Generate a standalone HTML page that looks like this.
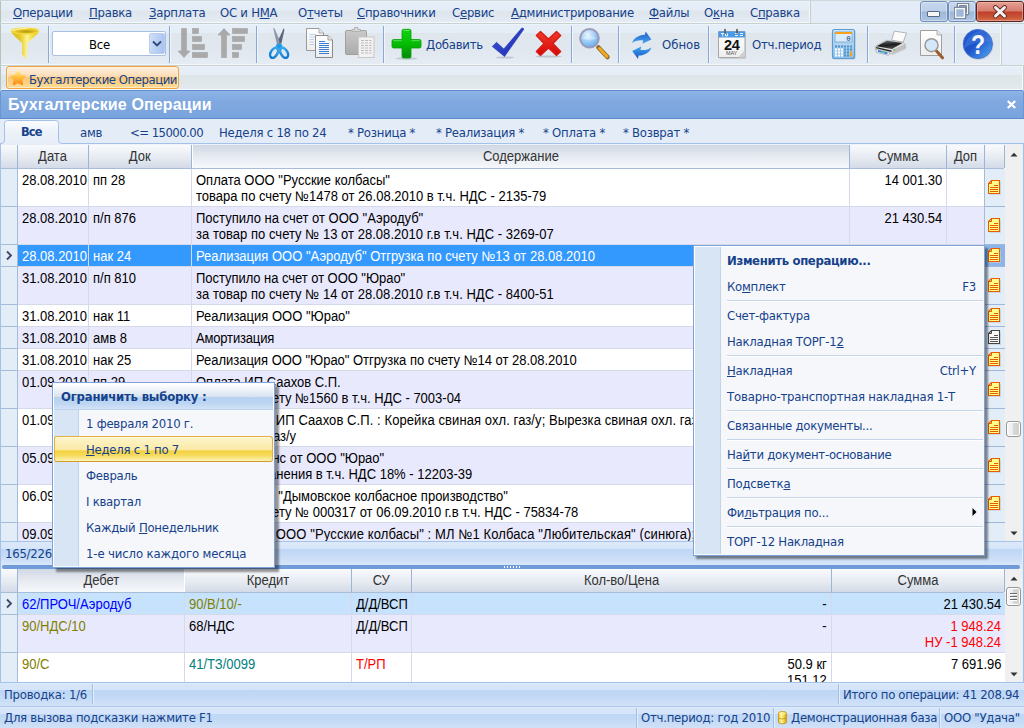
<!DOCTYPE html>
<html lang="ru"><head><meta charset="utf-8"><title>Бухгалтерские Операции</title>
<style>
*{box-sizing:border-box;margin:0;padding:0}
html,body{width:1024px;height:728px;overflow:hidden;background:#e4ecf7}
body{position:relative;font:13px "DejaVu Sans Condensed","Liberation Sans",sans-serif;color:#15428b;letter-spacing:-0.25px}
.a{position:absolute;white-space:nowrap}
.t{position:absolute;white-space:nowrap;line-height:16px;height:16px;margin-top:1px}
u{text-decoration:underline;text-underline-offset:1px;text-decoration-thickness:1px}
.g{font:13px "Liberation Sans",sans-serif;color:#000;letter-spacing:0}
.sep{position:absolute;width:1px;top:26px;height:37px;background:#8aa8d8;box-shadow:1px 0 0 #f0f5fb}
.hd{position:absolute;top:0;height:23px;background:linear-gradient(#f8fafc,#e8ecf3 50%,#d4dbe8);border-right:1px solid #9db4d6;font:13px "Liberation Sans",sans-serif;color:#333;letter-spacing:0;text-align:center;line-height:23px}
.row{position:absolute;left:0;width:1005px;border-bottom:1px solid #d4dae9}
.c{position:absolute;top:0;bottom:0;border-right:1px solid #d4dae9;font:13px "Liberation Sans",sans-serif;letter-spacing:0;line-height:16px;padding:3px 4px 0 4px;white-space:nowrap;overflow:hidden;color:#000}
.ind{position:absolute;left:0;top:0;bottom:-1px;width:18px;background:#e3edf7;border-right:1px solid #a5bbd8;border-bottom:1px solid #a5bbd8}
.ic{position:absolute;left:985px;top:0;bottom:-1px;width:20px;background:#e3edf7;border-bottom:1px solid #9fb8da;box-shadow:-1px 0 0 #a5bbd8}

.s{display:inline-block;font-size:14px;transform:scaleX(.9286);transform-origin:0 0;white-space:nowrap}
.s.r{transform-origin:100% 0}
.s.m{transform-origin:50% 0}
.mi{position:absolute;left:33px;height:16px;line-height:16px;white-space:nowrap;margin-top:1px}

.ttl{font-family:"Liberation Sans",sans-serif;font-weight:bold;font-size:16px;color:#fff;letter-spacing:0.13px;line-height:20px;margin-top:1px}
.ms{position:absolute;left:33px;right:1px;height:1px;background:#c5d5e8;box-shadow:0 1px 0 #fff}
</style></head>
<body>
<div class="a" style="left:0;top:0;width:1024px;height:24px;background:#e4edf7;border-top:1px solid #cdd8da;border-bottom:1px solid #c6d2cf"></div>
<div class="a" style="left:0;top:1px;width:811px;height:22px;background:linear-gradient(#f4f8fc 0,#e5edf7 1px,#e4ecf6 42%,#dfe6ed 44%,#e0e7ee 70%,#e5ecf4 100%);border-left:1px solid #b4c4b9;border-right:1px solid #c3cfc9;box-shadow:inset -1px -1px 0 #f4f8fc"></div>
<div class="t" style="left:13px;top:4px"><u>О</u>перации</div>
<div class="t" style="left:89px;top:4px"><u>П</u>равка</div>
<div class="t" style="left:149px;top:4px"><u>З</u>арплата</div>
<div class="t" style="left:220px;top:4px">ОС и Н<u>М</u>А</div>
<div class="t" style="left:298px;top:4px">О<u>т</u>четы</div>
<div class="t" style="left:357px;top:4px"><u>С</u>правочники</div>
<div class="t" style="left:452px;top:4px">С<u>е</u>рвис</div>
<div class="t" style="left:511px;top:4px"><u>А</u>дминистрирование</div>
<div class="t" style="left:649px;top:4px"><u>Ф</u>айлы</div>
<div class="t" style="left:704px;top:4px">О<u>к</u>на</div>
<div class="t" style="left:750px;top:4px">С<u>п</u>равка</div>
<div class="a" style="left:920px;top:1px;width:28px;height:21px;border:1px solid #6f8fba;border-radius:3px;background:linear-gradient(#c6d7ed,#bdd0e9 48%,#9db8d9 52%,#aec5e2);box-shadow:inset 0 0 0 1px rgba(255,255,255,.35)"><div class="a" style="left:6px;top:9px;width:13px;height:6px;background:#f6f6f6;border:1px solid #56677f;border-radius:1px"></div></div>
<div class="a" style="left:948px;top:1px;width:28px;height:21px;border:1px solid #6f8fba;border-radius:3px;background:linear-gradient(#c6d7ed,#bdd0e9 48%,#9db8d9 52%,#aec5e2);box-shadow:inset 0 0 0 1px rgba(255,255,255,.35)"><svg class="a" style="left:5px;top:1px" width="16" height="16" viewBox="0 0 16 16"><path d="M4.500 5 V1.500 H13.500 V10.500 H10.500" fill="none" stroke="#4e5f7a" stroke-width="3.400" stroke-linejoin="round"/><path d="M4.500 5 V1.500 H13.500 V10.500 H10.500" fill="none" stroke="#f6f6f6" stroke-width="1.600"/><rect x="1.500" y="5.500" width="9" height="9" fill="none" stroke="#4e5f7a" stroke-width="3.400" stroke-linejoin="round"/><rect x="1.500" y="5.500" width="9" height="9" fill="#9fb7d8" stroke="#f6f6f6" stroke-width="1.600"/></svg></div>
<div class="a" style="left:976px;top:1px;width:48px;height:21px;border:1px solid #5a2222;border-radius:3px;background:linear-gradient(#e3a295,#d67c6e 48%,#bf3e29 52%,#c85638 80%,#d3704c);box-shadow:inset 0 0 0 1px rgba(255,200,185,.45)"><svg class="a" style="left:15px;top:3px" width="16" height="14" viewBox="0 0 16 14"><path d="M3.500 2.500 L12.500 11 M12.500 2.500 L3.500 11" stroke="#6a2a25" stroke-width="4.800" stroke-linecap="round"/><path d="M3.500 2.500 L12.500 11 M12.500 2.500 L3.500 11" stroke="#f4f4f4" stroke-width="3" stroke-linecap="round"/></svg></div>
<div class="a" style="left:0;top:24px;width:1024px;height:42px;background:#e4edf7;border-bottom:1px solid #c8d3d0"></div>
<div class="a" style="left:0;top:24px;width:1002px;height:41px;background:linear-gradient(#f4f8fc 0,#e6eef8 1px,#e5edf7 21%,#dfe6ec 23%,#e0e7ee 60%,#e5ecf4 100%);border-left:1px solid #b4c4b9;border-right:1px solid #c3cfc9;box-shadow:inset -1px -1px 0 #f4f8fc"></div>
<div class="sep" style="left:48px"></div>
<div class="sep" style="left:169px"></div>
<div class="sep" style="left:256px"></div>
<div class="sep" style="left:383px"></div>
<div class="sep" style="left:571px"></div>
<div class="sep" style="left:618px"></div>
<div class="sep" style="left:708px"></div>
<div class="sep" style="left:867px"></div>
<div class="sep" style="left:954px"></div>
<svg class="a" style="left:0;top:24px" width="1002" height="41" viewBox="0 24 1002 41">
<defs>
<linearGradient id="fn1" x1="0" y1="0" x2="1" y2="0"><stop offset="0" stop-color="#dcbc1c"/><stop offset=".3" stop-color="#e4c626"/><stop offset=".58" stop-color="#fff48c"/><stop offset=".8" stop-color="#f2da3e"/><stop offset="1" stop-color="#e2c222"/></linearGradient>
<radialGradient id="fn2" cx=".55" cy=".6" r=".6"><stop offset="0" stop-color="#b6960e"/><stop offset=".5" stop-color="#dcbe24"/><stop offset="1" stop-color="#f6e252"/></radialGradient>
<linearGradient id="gp" x1="0" y1="0" x2="0" y2="1"><stop offset="0" stop-color="#12d312"/><stop offset=".5" stop-color="#06bd06"/><stop offset="1" stop-color="#048a04"/></linearGradient>
<linearGradient id="bl" x1="0" y1="0" x2="1" y2="1"><stop offset="0" stop-color="#3f55e0"/><stop offset="1" stop-color="#1a2aa8"/></linearGradient>
<linearGradient id="rd" x1="0" y1="0" x2="0" y2="1"><stop offset="0" stop-color="#f23a2a"/><stop offset="1" stop-color="#d40808"/></linearGradient>
<radialGradient id="ln" cx=".4" cy=".3" r=".8"><stop offset="0" stop-color="#eaf6ff"/><stop offset=".6" stop-color="#8cc4f4"/><stop offset="1" stop-color="#5aa0e6"/></radialGradient>
<linearGradient id="hl" x1="0" y1="0" x2="1" y2="1"><stop offset="0" stop-color="#2a60d2"/><stop offset=".45" stop-color="#1d52c8"/><stop offset=".9" stop-color="#489cec"/></linearGradient>
<linearGradient id="rf" x1="0" y1="0" x2="0" y2="1"><stop offset="0" stop-color="#1c58c8"/><stop offset="1" stop-color="#4aa8f0"/></linearGradient>
<linearGradient id="pg" x1="0" y1="0" x2="0" y2="1"><stop offset="0" stop-color="#ffffff"/><stop offset="1" stop-color="#eeeeee"/></linearGradient>
<linearGradient id="cb" x1="0" y1="0" x2="0" y2="1"><stop offset="0" stop-color="#c9c9c9"/><stop offset="1" stop-color="#ababab"/></linearGradient>
<linearGradient id="cl" x1="0" y1="0" x2="0" y2="1"><stop offset="0" stop-color="#cfe6f8"/><stop offset="1" stop-color="#8fc0e8"/></linearGradient>
<linearGradient id="sc" x1="0" y1="0" x2="0" y2="1"><stop offset="0" stop-color="#3aa8f0"/><stop offset="1" stop-color="#0f7ad0"/></linearGradient>
<linearGradient id="rf2" x1="0" y1="0" x2="0" y2="1"><stop offset="0" stop-color="#3aa6f0"/><stop offset="1" stop-color="#1a54c6"/></linearGradient>
<linearGradient id="prn" x1="0" y1="0" x2=".3" y2="1"><stop offset="0" stop-color="#7a7a7a"/><stop offset=".6" stop-color="#1c1c1c"/><stop offset="1" stop-color="#4a4a4a"/></linearGradient>
</defs>
<!-- funnel -->
<g>
<path d="M11.200 31.200 C11.500 34.500,21.500 41.500,22 43.500 L22 54.500 L26.600 59.200 L27.200 43.500 C27.800 41.500,38.500 34.500,38.900 31.200 Z" fill="url(#fn1)"/>
<ellipse cx="25" cy="31" rx="13.600" ry="2.900" fill="url(#fn2)" stroke="#f4dc3c" stroke-width="1.100"/>
<path d="M12.500 30.600 Q18 28.300,27 28.500" fill="none" stroke="#fffbd0" stroke-width=".9" opacity=".9"/>
</g>
<!-- sort desc -->
<g fill="#a9a9a9" stroke="#9a9a9a" stroke-width=".5">
<path d="M181.5 28.5 H186.5 V51 H190 L184 57.5 L178 51 H181.5 Z"/>
<rect x="192.5" y="28.5" width="6" height="5"/><rect x="192.5" y="36.5" width="9" height="5"/><rect x="192.5" y="44.5" width="12" height="5"/><rect x="192.5" y="52.5" width="15" height="5"/>
<path d="M223.5 57.5 H221.5 V35 H218 L224 28.5 L230 35 H226.5 V57.5 Z"/>
<rect x="232.5" y="28.5" width="15" height="5"/><rect x="232.5" y="36.5" width="12" height="5"/><rect x="232.5" y="44.5" width="9" height="5"/><rect x="232.5" y="52.5" width="6" height="5"/>
</g>
<!-- scissors -->
<g>
<path d="M273.2 28 L274.4 28.2 L280.8 42.8 L280.2 44.2 L276.8 44 Z" fill="#8d97ab"/>
<path d="M283.8 28 L284.4 30 L281.4 43.5 L279.6 43.5 L278.8 39 Z" fill="#5c667c"/>
<path d="M276.900 43.800 H281.300 L283 47.500 L279.100 54 L275.200 47.500 Z" fill="#1b9be6"/>
<g stroke="url(#sc)" fill="none" stroke-width="2.500">
<ellipse cx="274.100" cy="52.800" rx="3.300" ry="5.500" transform="rotate(30 274.100 52.800)"/>
<ellipse cx="284.100" cy="52.800" rx="3.300" ry="5.500" transform="rotate(-30 284.100 52.800)"/>
</g>
</g>
<!-- copy -->
<g>
<path d="M306.5 28.5 H319 L323.5 33 V50.5 H306.5 Z" fill="url(#pg)" stroke="#9a9a9a" stroke-width="1"/>
<path d="M319 28.5 V33 H323.5" fill="#e8e8e8" stroke="#9a9a9a" stroke-width=".8"/>
<path d="M309.5 34.5 H316 M309.5 37 H316 M309.5 39.500 H314 M309.5 42 H314 M309.5 44.5 H314" stroke="#b8cfe8" stroke-width="1"/>
<path d="M315.500 35.5 H328 L332.500 40 V57.500 H315.500 Z" fill="url(#pg)" stroke="#8a8a8a" stroke-width="1"/>
<path d="M328 35.5 V40 H332.5" fill="#e8e8e8" stroke="#8a8a8a" stroke-width=".8"/>
<path d="M319 41.5 H325 M319 43.500 H329 M319 45.500 H329 M319 47.500 H329 M319 49.500 H329 M319 51.500 H329 M319 53.500 H329" stroke="#3a7fd0" stroke-width="1"/>
</g>
<!-- paste -->
<g>
<rect x="345.500" y="30.500" width="21" height="24" rx="1" fill="url(#cb)" stroke="#a0a0a0"/>
<path d="M352 31.5 V29.5 H354.5 V27.500 H358 V29.500 H360.500 V31.500 Z" fill="#d8d8d8" stroke="#a8a8a8" stroke-width=".8"/>
<rect x="358.500" y="37" width="15.500" height="20.500" fill="#f2f2f2" stroke="#c8c8c8"/>
<path d="M361 40.500 H371.500 M361 43 H371.500 M361 45.500 H371.500 M361 48 H371.500 M361 50.500 H371.500 M361 53 H371.500" stroke="#b4b4b4" stroke-width=".9" stroke-dasharray="3 1"/>
</g>
<!-- plus -->
<g>
<ellipse cx="406.500" cy="58.500" rx="11" ry="1.2" fill="#9aa5b0" opacity=".5"/>
<path d="M403.500 29.300 H409.500 Q411 29.300,411 30.800 V39.500 H419.500 Q421 39.500,421 41 V46.500 Q421 48,419.500 48 H411 V56.500 Q411 58,409.500 58 H403.500 Q402 58,402 56.500 V48 H393.500 Q392 48,392 46.500 V41 Q392 39.500,393.500 39.500 H402 V30.800 Q402 29.300,403.500 29.300 Z" fill="url(#gp)" stroke="#05a005" stroke-width=".8"/>
<path d="M403.500 30.500 H409.500 M393.500 40.700 H401.500 M411.500 40.700 H419.500" stroke="#6aea6a" stroke-width="1" opacity=".8"/>
</g>
<!-- check -->
<g>
<ellipse cx="505" cy="57.500" rx="9" ry="1" fill="#9aa5b0" opacity=".5"/>
<path d="M492.300 46.500 L496.500 42.300 L503.800 49 L522 27.800 L524 29 L504.500 56.500 Z" fill="url(#bl)" stroke="#2233b4" stroke-width=".6" stroke-linejoin="round"/>
</g>
<!-- red x -->
<g>
<ellipse cx="548.500" cy="56.500" rx="13" ry="1" fill="#9aa5b0" opacity=".5"/>
<path d="M540.500 31.500 L548.500 39 L556.500 31.500 L560.700 35.500 L553 43.500 L560.700 51.500 L556.500 55.500 L548.500 48 L540.500 55.500 L536.300 51.500 L544 43.500 L536.300 35.500 Z" fill="url(#rd)" stroke="#d81a10" stroke-width="1.2" stroke-linejoin="round"/>
</g>
<!-- magnifier -->
<g>
<path d="M598.500 47.500 L607.500 57" stroke="#8a6a30" stroke-width="4.500" stroke-linecap="round"/>
<path d="M599.500 48.500 L607 56.500" stroke="#f4a820" stroke-width="3" stroke-linecap="round"/>
<circle cx="589.500" cy="38.300" r="9.300" fill="url(#ln)" stroke="#9c9cb8" stroke-width="2"/>
<path d="M582 38.500 Q589.500 33,597 38.500 Q589.500 41,582 38.500 Z" fill="#fff" opacity=".35"/>
</g>
<!-- refresh -->
<g>
<path d="M632.200 43 C633.500 38.500,638 35.300,645 34.800 L645.600 31.400 L651.400 39.400 L642.300 43.800 L643.200 40.500 C639 39.800,635 41,632.200 43 Z" fill="url(#rf)"/>
<path d="M651.400 47.400 C650.100 51.900,645.600 55.100,638.600 55.600 L638 59 L632.200 51 L641.300 46.600 L640.400 49.900 C644.600 50.600,648.600 49.400,651.400 47.400 Z" fill="url(#rf2)"/>
</g>
<!-- calendar -->
<g>
<path d="M719 32 H745 V58 H719 Z" fill="#b0b0b0" opacity=".6" transform="translate(.8 .8)"/>
<path d="M718.500 31.500 H745 V57.500 H718.500 Z" fill="url(#pg)" stroke="#a8a8a8" stroke-width="1"/>
<path d="M745 50 L738 57.500 H745 Z" fill="#d0d0d0"/>
<rect x="718.500" y="31.500" width="26.500" height="6" fill="#4a9ae6"/>
<path d="M721 33.500 H724.500 M722.700 33.500 V36.500 M725.500 33.500 V36 H727.500 V33.500 M735 33.500 H738 M735 35.500 H738 M740 33.500 H743 M740 35.500 H743" stroke="#fff" stroke-width="1" fill="none" opacity=".85"/>
<path d="M725 33 V29.500 M737 33 V29.500" stroke="#555" stroke-width="1.600" stroke-linecap="round"/>
<text x="731.800" y="49.500" text-anchor="middle" font-family="Liberation Sans, sans-serif" font-weight="bold" font-size="14.500" fill="#111" letter-spacing="-.3">24</text>
<text x="731.500" y="54.800" text-anchor="middle" font-family="Liberation Sans, sans-serif" font-size="5.500" fill="#555">MAY</text>
</g>
<!-- calculator -->
<g>
<rect x="833" y="30" width="22.500" height="29.500" rx="2" fill="#9aa5b0" opacity=".45"/>
<rect x="832.500" y="29.500" width="22" height="29" rx="2" fill="url(#cl)" stroke="#5a9bd4" stroke-width="1.200"/>
<rect x="835" y="32" width="17" height="10" fill="#dcecfb" stroke="#6aa0d0" stroke-width=".8"/>
<rect x="835" y="32" width="17" height="2" fill="#f7a21a"/>
<text x="850.500" y="41" text-anchor="end" font-family="Liberation Mono, monospace" font-size="7.500" font-weight="bold" fill="#4a6f9a">0</text>
<g fill="#fff">
<rect x="835" y="45.500" width="2" height="2" fill="#4f90c8"/><rect x="838" y="45.500" width="2" height="2" fill="#4f90c8"/><rect x="841" y="45.500" width="2" height="2" fill="#4f90c8"/><rect x="844" y="45.500" width="2" height="2" fill="#4f90c8"/><rect x="847" y="45.500" width="2" height="2" fill="#4f90c8"/><rect x="850" y="45.500" width="2" height="2" fill="#4f90c8"/>
<rect x="835" y="48.500" width="2" height="2"/><rect x="838" y="48.500" width="2" height="2"/><rect x="841" y="48.500" width="2" height="2"/><rect x="844" y="48.500" width="2" height="2" fill="#4f90c8"/><rect x="847" y="48.500" width="2" height="2" fill="#4f90c8"/><rect x="850" y="48.500" width="2" height="2" fill="#4f90c8"/>
<rect x="835" y="51.500" width="2" height="2"/><rect x="838" y="51.500" width="2" height="2"/><rect x="841" y="51.500" width="2" height="2"/><rect x="844" y="51.500" width="2" height="2" fill="#4f90c8"/><rect x="847" y="51.500" width="2" height="2" fill="#4f90c8"/><rect x="850" y="51.500" width="2" height="5" fill="#f7a21a"/>
<rect x="835" y="54.500" width="2" height="2"/><rect x="838" y="54.500" width="2" height="2"/><rect x="841" y="54.500" width="2" height="2"/><rect x="844" y="54.500" width="2" height="2" fill="#4f90c8"/><rect x="847" y="54.500" width="2" height="2" fill="#4f90c8"/>
</g>
</g>
<!-- printer -->
<g>
<path d="M891.600 40.200 L894.400 31.100 L906.500 33 L903.200 42.100 Z" fill="#fbfbfb" stroke="#9a9a9a" stroke-width=".7"/>
<path d="M875.100 47 L875.700 46 L886.700 40.200 L903.200 42.700 L905.400 44.300 L905.400 48.700 L892.700 54.200 L875.300 49.600 Z" fill="#dcdcdc" stroke="#9c9c9c" stroke-width=".5"/>
<path d="M876.500 46.200 L886.900 40.700 L902.300 43 L892 49 Z" fill="url(#prn)"/>
<path d="M892.600 50.300 L905 44.900 M892.600 51.600 L905 46.200 M892.600 52.900 L905 47.500" stroke="#9e9e9e" stroke-width=".6"/>
<path d="M876.200 49 L889.800 52.300 L888.500 55.300 L876.200 52.200 Z" fill="#f4f4f4" stroke="#8a8a8a" stroke-width=".5"/>
<path d="M878 50 L887.800 52.400 L887 54.200 L877.800 51.800 Z" fill="#2f7fe0"/>
<path d="M881.500 50.900 L885 51.700 L884.500 53.500 L881 52.700 Z" fill="#5fc8a0"/>
<path d="M876 48.300 L891.500 52 L891.500 50.500 L876 47 Z" fill="#2a2a2a"/>
<circle cx="894.300" cy="49.800" r=".8" fill="#4fc04f"/>
</g>
<!-- preview -->
<g>
<path d="M920.500 30.500 H937 L941.500 35 V55.500 H920.500 Z" fill="url(#pg)" stroke="#a0a0a0" stroke-width="1"/>
<path d="M937 30.500 V35 H941.500" fill="#e8e8e8" stroke="#a0a0a0" stroke-width=".8"/>
<path d="M936.500 51 L942.500 57.800" stroke="#9a5a2a" stroke-width="3" stroke-linecap="round"/>
<circle cx="931.500" cy="45.200" r="6.500" fill="#d4e8fa" stroke="#9a9a9a" stroke-width="1.500"/>
</g>
<!-- help -->
<g>
<circle cx="978.500" cy="44.800" r="15" fill="#9aa5b0" opacity=".4"/>
<circle cx="977.800" cy="44" r="14.600" fill="url(#hl)" stroke="#3d6fd6" stroke-width=".9"/>
<path d="M964 48 Q966 36,980 30 Q990 32,992.500 42 Q978 40,964 48 Z" fill="#5a90e8" opacity=".35"/>
<text x="0" y="0" transform="translate(977.900 54) scale(.84 1)" text-anchor="middle" font-family="Liberation Sans, sans-serif" font-weight="bold" font-size="27.500" fill="#f4f4fa">?</text>
</g>
</svg>

<div class="a" style="left:52px;top:31px;width:114px;height:25px;background:#fff;border:1px solid #a9c0e2;border-radius:2px"></div>
<div class="t" style="left:89px;top:36px;color:#000">Все</div>
<div class="a" style="left:149px;top:33px;width:16px;height:21px;background:linear-gradient(100deg,#d0dff8,#b9cff4 50%,#a8c2f0);border:1px solid #b9cdf0;border-radius:2px"></div>
<svg class="a" style="left:152px;top:40px" width="10" height="8" viewBox="0 0 10 8"><path d="M1 1.5 L5 5.5 L9 1.5" fill="none" stroke="#33477a" stroke-width="1.9"/></svg>
<div class="t" style="left:426px;top:36px">Добавить</div>
<div class="t" style="left:662px;top:36px"><span style="letter-spacing:0">Обнов</span></div>
<div class="t" style="left:752px;top:36px">Отч.период</div>
<div class="a" style="left:0;top:66px;width:1024px;height:24px;background:linear-gradient(#f4f8fc 0,#e6eef7 1px,#e5edf6 37%,#dee6e8 39%,#e0e7ea 75%,#e4eaf0 95%,#f6f9fc 96%);border-left:1px solid #b4c4b9;border-right:1px solid #c3cfc9;box-shadow:inset -1px 0 0 #f4f8fc;"></div>
<div class="a" style="left:6px;top:66px;width:173px;height:23px;border:1px solid #f1a346;border-radius:3px;background:linear-gradient(#fdefdf,#fde3c4 30%,#fbd9ae 46%,#f9c779 50%,#fad188 75%,#fbdd96);box-shadow:inset 0 0 0 1px rgba(255,240,215,.7)"></div>
<svg class="a" style="left:9px;top:69px" width="18" height="18" viewBox="0 0 18 18"><defs><linearGradient id="st" x1="0" y1="0" x2="0" y2="1"><stop offset="0" stop-color="#ffee9a"/><stop offset=".45" stop-color="#ffc040"/><stop offset="1" stop-color="#ff8c14"/></linearGradient></defs><path d="M9.0 1.8 L11.4 6.2 L16.2 7.1 L12.8 10.6 L13.5 15.5 L9.0 13.4 L4.5 15.5 L5.2 10.6 L1.8 7.1 L6.6 6.2 Z" fill="url(#st)" stroke="url(#st)" stroke-width="1.4" stroke-linejoin="round"/></svg>
<div class="t" style="left:29px;top:71px;letter-spacing:-0.45px">Бухгалтерские Операции</div>
<div class="a" style="left:0;top:90px;width:1024px;height:29px;background:linear-gradient(#8db3e6,#80a9e0 40%,#79a3dd);border-top:1px solid #5f8cd0;border-bottom:1px solid #5c8acd;border-left:1px solid #6a96d6;border-right:1px solid #6a96d6;border-radius:2px 2px 0 0"></div>
<div class="a ttl" style="left:8px;top:94px">Бухгалтерские Операции</div>
<svg class="a" style="left:1006px;top:100px" width="11" height="9" viewBox="0 0 11 9"><path d="M1.8 1 L9.200 8 M9.200 1 L1.800 8" stroke="#fff" stroke-width="2.3"/></svg>
<div class="a" style="left:0;top:119px;width:1024px;height:26px;background:#e4ecf7"></div>
<svg class="a" style="left:0;top:119px" width="1024" height="26" viewBox="0 119 1024 26"><defs><linearGradient id="ftb" x1="0" y1="0" x2="0" y2="1"><stop offset="0" stop-color="#fbfcfe"/><stop offset=".5" stop-color="#ecf1f9"/><stop offset="1" stop-color="#e7edf7"/></linearGradient></defs><rect x="0" y="144" width="1024" height="1" fill="#eef3fa"/><path d="M1 143.500 Q4.500 143.500,4.500 140 L4.500 123.500 Q4.500 120.500,7.500 120.500 L55.500 120.500 Q58.500 120.500,58.500 123.500 L58.500 140 Q58.500 143.500,62 143.500 L62 145 L1 145 Z" fill="url(#ftb)"/><path d="M0 143.500 H1 Q4.500 143.500,4.500 140 L4.500 123.500 Q4.500 120.500,7.500 120.500 L55.500 120.500 Q58.500 120.500,58.500 123.500 L58.500 140 Q58.500 143.500,62 143.500 L1024 143.500" fill="none" stroke="#a3c2ea" stroke-width="1"/></svg>
<div class="t" style="left:21px;top:123px;font-weight:bold;font-size:12.6px;letter-spacing:-0.8px">Все</div>
<div class="t" style="left:80px;top:124px">амв</div>
<div class="t" style="left:130px;top:124px"><span style="letter-spacing:-0.55px">&lt;= 15000.00</span></div>
<div class="t" style="left:219px;top:124px">Неделя с 18 по 24</div>
<div class="t" style="left:348px;top:124px">* Розница *</div>
<div class="t" style="left:436px;top:124px">* Реализация *</div>
<div class="t" style="left:543px;top:124px">* Оплата *</div>
<div class="t" style="left:623px;top:124px">* Возврат *</div>
<div class="a" style="left:0;top:145px;width:1024px;height:396px;background:#fff;overflow:hidden">
<div class="a" style="left:1005px;top:0;width:18px;height:396px;background:#f0f0f0;"></div>
<div class="hd" style="left:0px;width:18px;"><span class="s m"></span></div>
<div class="hd" style="left:18px;width:71px;"><span class="s m">Дата</span></div>
<div class="hd" style="left:89px;width:103px;"><span class="s m">Док</span></div>
<div class="hd" style="left:192px;width:658px;background:linear-gradient(#d1d8e5,#e6eaf1 50%,#f6f8fb);box-shadow:inset 1px 0 0 #fff"><span class="s m">Содержание</span></div>
<div class="hd" style="left:850px;width:97px;"><span class="s m">Сумма</span></div>
<div class="hd" style="left:947px;width:38px;"><span class="s m">Доп</span></div>
<div class="hd" style="left:985px;width:20px;"><span class="s m"></span></div>
<div class="a" style="left:0;top:23px;width:1004px;height:1px;background:#a9bdd9"></div>
<div class="row" style="top:24px;height:38px;background:#fff">
<div class="ind"></div>
<div class="c" style="left:18px;width:71px;color:#000"><span class="s">28.08.2010</span></div>
<div class="c" style="left:89px;width:103px;color:#000"><span class="s">пп 28</span></div>
<div class="c" style="left:192px;width:658px;color:#000;padding-left:4px"><span class="s">Оплата ООО "Русские колбасы"<br>товара по счету №1478 от 26.08.2010 в т.ч. НДС - 2135-79</span></div>
<div class="c" style="left:850px;width:97px;text-align:right;color:#000"><span class="s r">14 001.30</span></div>
<div class="c" style="left:947px;width:38px"></div>
<div class="ic" style=""><svg class="a" style="left:3px;top:11px" width="14" height="16" viewBox="0 0 14 16"><path d="M1.500 14.500 H12.500 V2" fill="none" stroke="#c3cfdf" stroke-width="1" opacity=".7"/><path d="M3.500 0.500 H11.500 V13.500 H0.500 V3.500 Z" fill="#ffff8a" stroke="#e85c00" stroke-width="1.100" stroke-linejoin="miter"/><path d="M1 3.500 H3.500 V1" fill="none" stroke="#e85c00" stroke-width="1"/><path d="M6 5.500 H10 M2 7.500 H10 M2 9.500 H10 M2 11.500 H10" stroke="#e85c00" stroke-width="1"/></svg></div>
</div>
<div class="row" style="top:62px;height:38px;background:#e9e9fd">
<div class="ind"></div>
<div class="c" style="left:18px;width:71px;color:#000"><span class="s">28.08.2010</span></div>
<div class="c" style="left:89px;width:103px;color:#000"><span class="s">п/п 876</span></div>
<div class="c" style="left:192px;width:658px;color:#000;padding-left:4px"><span class="s">Поступило на счет от ООО "Аэродуб"<br><span style="letter-spacing:0.035px">за товар по счету № 13 от 28.08.2010 г.в т.ч. НДС - 3269-07</span></span></div>
<div class="c" style="left:850px;width:97px;text-align:right;color:#000"><span class="s r">21 430.54</span></div>
<div class="c" style="left:947px;width:38px"></div>
<div class="ic" style=""><svg class="a" style="left:3px;top:11px" width="14" height="16" viewBox="0 0 14 16"><path d="M1.500 14.500 H12.500 V2" fill="none" stroke="#c3cfdf" stroke-width="1" opacity=".7"/><path d="M3.500 0.500 H11.500 V13.500 H0.500 V3.500 Z" fill="#ffff8a" stroke="#e85c00" stroke-width="1.100" stroke-linejoin="miter"/><path d="M1 3.500 H3.500 V1" fill="none" stroke="#e85c00" stroke-width="1"/><path d="M6 5.500 H10 M2 7.500 H10 M2 9.500 H10 M2 11.500 H10" stroke="#e85c00" stroke-width="1"/></svg></div>
</div>
<div class="row" style="top:100px;height:22px;background:#3399ff">
<div class="ind"><svg class="a" style="left:6px;top:5px" width="7" height="11" viewBox="0 0 7 11"><path d="M1 1.5 L5 5.5 L1 9.5" fill="none" stroke="#3a4a66" stroke-width="1.8"/></svg></div>
<div class="c" style="left:18px;width:71px;color:#fff"><span class="s">28.08.2010</span></div>
<div class="c" style="left:89px;width:103px;color:#fff"><span class="s">нак 24</span></div>
<div class="c" style="left:192px;width:658px;color:#fff;padding-left:4px"><span class="s">Реализация ООО "Аэродуб" Отгрузка по счету №13 от 28.08.2010</span></div>
<div class="c" style="left:850px;width:97px;text-align:right;color:#fff"><span class="s r">25 200.00</span></div>
<div class="c" style="left:947px;width:38px"></div>
<div class="ic" style="background:#8db4ea"><svg class="a" style="left:3px;top:3px" width="14" height="16" viewBox="0 0 14 16"><path d="M1.500 14.500 H12.500 V2" fill="none" stroke="#c3cfdf" stroke-width="1" opacity=".7"/><path d="M3.500 0.500 H11.500 V13.500 H0.500 V3.500 Z" fill="#ffff8a" stroke="#e85c00" stroke-width="1.100" stroke-linejoin="miter"/><path d="M1 3.500 H3.500 V1" fill="none" stroke="#e85c00" stroke-width="1"/><path d="M6 5.500 H10 M2 7.500 H10 M2 9.500 H10 M2 11.500 H10" stroke="#e85c00" stroke-width="1"/></svg></div>
</div>
<div class="row" style="top:122px;height:38px;background:#e9e9fd">
<div class="ind"></div>
<div class="c" style="left:18px;width:71px;color:#000"><span class="s">31.08.2010</span></div>
<div class="c" style="left:89px;width:103px;color:#000"><span class="s">п/п 810</span></div>
<div class="c" style="left:192px;width:658px;color:#000;padding-left:4px"><span class="s"><span style="letter-spacing:-0.05px">Поступило на счет от ООО "Юрао"</span><br><span style="letter-spacing:0.035px">за товар по счету № 14 от 28.08.2010 г.в т.ч. НДС - 8400-51</span></span></div>
<div class="c" style="left:850px;width:97px;text-align:right;color:#000"><span class="s r">55 070.00</span></div>
<div class="c" style="left:947px;width:38px"></div>
<div class="ic" style=""><svg class="a" style="left:3px;top:11px" width="14" height="16" viewBox="0 0 14 16"><path d="M1.500 14.500 H12.500 V2" fill="none" stroke="#c3cfdf" stroke-width="1" opacity=".7"/><path d="M3.500 0.500 H11.500 V13.500 H0.500 V3.500 Z" fill="#ffff8a" stroke="#e85c00" stroke-width="1.100" stroke-linejoin="miter"/><path d="M1 3.500 H3.500 V1" fill="none" stroke="#e85c00" stroke-width="1"/><path d="M6 5.500 H10 M2 7.500 H10 M2 9.500 H10 M2 11.500 H10" stroke="#e85c00" stroke-width="1"/></svg></div>
</div>
<div class="row" style="top:160px;height:22px;background:#fff">
<div class="ind"></div>
<div class="c" style="left:18px;width:71px;color:#000"><span class="s">31.08.2010</span></div>
<div class="c" style="left:89px;width:103px;color:#000"><span class="s">нак 11</span></div>
<div class="c" style="left:192px;width:658px;color:#000;padding-left:4px"><span class="s">Реализация ООО "Юрао"</span></div>
<div class="c" style="left:850px;width:97px;text-align:right;color:#000"><span class="s r">12 400.00</span></div>
<div class="c" style="left:947px;width:38px"></div>
<div class="ic" style=""><svg class="a" style="left:3px;top:3px" width="14" height="16" viewBox="0 0 14 16"><path d="M1.500 14.500 H12.500 V2" fill="none" stroke="#c3cfdf" stroke-width="1" opacity=".7"/><path d="M3.500 0.500 H11.500 V13.500 H0.500 V3.500 Z" fill="#ffff8a" stroke="#e85c00" stroke-width="1.100" stroke-linejoin="miter"/><path d="M1 3.500 H3.500 V1" fill="none" stroke="#e85c00" stroke-width="1"/><path d="M6 5.500 H10 M2 7.500 H10 M2 9.500 H10 M2 11.500 H10" stroke="#e85c00" stroke-width="1"/></svg></div>
</div>
<div class="row" style="top:182px;height:22px;background:#e9e9fd">
<div class="ind"></div>
<div class="c" style="left:18px;width:71px;color:#000"><span class="s">31.08.2010</span></div>
<div class="c" style="left:89px;width:103px;color:#000"><span class="s">амв 8</span></div>
<div class="c" style="left:192px;width:658px;color:#000;padding-left:4px"><span class="s"><span style="letter-spacing:-0.18px">Амортизация</span></span></div>
<div class="c" style="left:850px;width:97px;text-align:right;color:#000"><span class="s r">3 150.00</span></div>
<div class="c" style="left:947px;width:38px"></div>
<div class="ic" style=""><svg class="a" style="left:3px;top:3px" width="14" height="16" viewBox="0 0 14 16"><path d="M1.500 14.500 H12.500 V2" fill="none" stroke="#c3cfdf" stroke-width="1" opacity=".7"/><path d="M3.500 0.500 H11.500 V13.500 H0.500 V3.500 Z" fill="#fafafa" stroke="#444" stroke-width="1.100" stroke-linejoin="miter"/><path d="M1 3.500 H3.500 V1" fill="none" stroke="#444" stroke-width="1"/><path d="M6 5.500 H10 M2 7.500 H10 M2 9.500 H10 M2 11.500 H10" stroke="#555" stroke-width="1"/></svg></div>
</div>
<div class="row" style="top:204px;height:22px;background:#fff">
<div class="ind"></div>
<div class="c" style="left:18px;width:71px;color:#000"><span class="s">31.08.2010</span></div>
<div class="c" style="left:89px;width:103px;color:#000"><span class="s">нак 25</span></div>
<div class="c" style="left:192px;width:658px;color:#000;padding-left:4px"><span class="s"><span style="letter-spacing:-0.03px">Реализация ООО "Юрао" Отгрузка по счету №14 от 28.08.2010</span></span></div>
<div class="c" style="left:850px;width:97px;text-align:right;color:#000"><span class="s r">55 070.00</span></div>
<div class="c" style="left:947px;width:38px"></div>
<div class="ic" style=""><svg class="a" style="left:3px;top:3px" width="14" height="16" viewBox="0 0 14 16"><path d="M1.500 14.500 H12.500 V2" fill="none" stroke="#c3cfdf" stroke-width="1" opacity=".7"/><path d="M3.500 0.500 H11.500 V13.500 H0.500 V3.500 Z" fill="#ffff8a" stroke="#e85c00" stroke-width="1.100" stroke-linejoin="miter"/><path d="M1 3.500 H3.500 V1" fill="none" stroke="#e85c00" stroke-width="1"/><path d="M6 5.500 H10 M2 7.500 H10 M2 9.500 H10 M2 11.500 H10" stroke="#e85c00" stroke-width="1"/></svg></div>
</div>
<div class="row" style="top:226px;height:38px;background:#e9e9fd">
<div class="ind"></div>
<div class="c" style="left:18px;width:71px;color:#000"><span class="s">01.09.2010</span></div>
<div class="c" style="left:89px;width:103px;color:#000"><span class="s">пп 29</span></div>
<div class="c" style="left:192px;width:658px;color:#000;padding-left:4px"><span class="s">Оплата ИП Саахов С.П.<br>товара по счету №1560 в т.ч. НДС - 7003-04</span></div>
<div class="c" style="left:850px;width:97px;text-align:right;color:#000"><span class="s r">45 910.00</span></div>
<div class="c" style="left:947px;width:38px"></div>
<div class="ic" style=""><svg class="a" style="left:3px;top:11px" width="14" height="16" viewBox="0 0 14 16"><path d="M1.500 14.500 H12.500 V2" fill="none" stroke="#c3cfdf" stroke-width="1" opacity=".7"/><path d="M3.500 0.500 H11.500 V13.500 H0.500 V3.500 Z" fill="#ffff8a" stroke="#e85c00" stroke-width="1.100" stroke-linejoin="miter"/><path d="M1 3.500 H3.500 V1" fill="none" stroke="#e85c00" stroke-width="1"/><path d="M6 5.500 H10 M2 7.500 H10 M2 9.500 H10 M2 11.500 H10" stroke="#e85c00" stroke-width="1"/></svg></div>
</div>
<div class="row" style="top:264px;height:38px;background:#fff">
<div class="ind"></div>
<div class="c" style="left:18px;width:71px;color:#000"><span class="s">01.09.2010</span></div>
<div class="c" style="left:89px;width:103px;color:#000"><span class="s">нак 26</span></div>
<div class="c" style="left:192px;width:658px;color:#000;padding-left:4px"><span class="s"><span style="display:inline-block;width:86px;overflow:hidden;vertical-align:top">Реализация </span><span style="letter-spacing:0.09px">ИП Саахов С.П. : Корейка свиная охл. газ/у; Вырезка свиная охл. газ/у; Шейка свиная охл.</span><br><span style="display:inline-block;width:78px;overflow:hidden;vertical-align:top">Лопатка охл. </span>газ/у</span></div>
<div class="c" style="left:850px;width:97px;text-align:right;color:#000"><span class="s r">38 400.00</span></div>
<div class="c" style="left:947px;width:38px"></div>
<div class="ic" style=""><svg class="a" style="left:3px;top:11px" width="14" height="16" viewBox="0 0 14 16"><path d="M1.500 14.500 H12.500 V2" fill="none" stroke="#c3cfdf" stroke-width="1" opacity=".7"/><path d="M3.500 0.500 H11.500 V13.500 H0.500 V3.500 Z" fill="#ffff8a" stroke="#e85c00" stroke-width="1.100" stroke-linejoin="miter"/><path d="M1 3.500 H3.500 V1" fill="none" stroke="#e85c00" stroke-width="1"/><path d="M6 5.500 H10 M2 7.500 H10 M2 9.500 H10 M2 11.500 H10" stroke="#e85c00" stroke-width="1"/></svg></div>
</div>
<div class="row" style="top:302px;height:38px;background:#e9e9fd">
<div class="ind"></div>
<div class="c" style="left:18px;width:71px;color:#000"><span class="s">05.09.2010</span></div>
<div class="c" style="left:89px;width:103px;color:#000"><span class="s">п/п 812</span></div>
<div class="c" style="left:192px;width:658px;color:#000;padding-left:4px"><span class="s">Получен аванс от ООО "Юрао"<br>за услуги хранения в т.ч. НДС 18% - 12203-39</span></div>
<div class="c" style="left:850px;width:97px;text-align:right;color:#000"><span class="s r">80 000.00</span></div>
<div class="c" style="left:947px;width:38px"></div>
<div class="ic" style=""><svg class="a" style="left:3px;top:11px" width="14" height="16" viewBox="0 0 14 16"><path d="M1.500 14.500 H12.500 V2" fill="none" stroke="#c3cfdf" stroke-width="1" opacity=".7"/><path d="M3.500 0.500 H11.500 V13.500 H0.500 V3.500 Z" fill="#ffff8a" stroke="#e85c00" stroke-width="1.100" stroke-linejoin="miter"/><path d="M1 3.500 H3.500 V1" fill="none" stroke="#e85c00" stroke-width="1"/><path d="M6 5.500 H10 M2 7.500 H10 M2 9.500 H10 M2 11.500 H10" stroke="#e85c00" stroke-width="1"/></svg></div>
</div>
<div class="row" style="top:340px;height:38px;background:#fff">
<div class="ind"></div>
<div class="c" style="left:18px;width:71px;color:#000"><span class="s">06.09.2010</span></div>
<div class="c" style="left:89px;width:103px;color:#000"><span class="s">п/п 814</span></div>
<div class="c" style="left:192px;width:658px;color:#000;padding-left:4px"><span class="s">Оплата ООО "Дымовское колбасное производство"<br>товара по счету № 000317 от 06.09.2010 г.в т.ч. НДС - 75834-78</span></div>
<div class="c" style="left:850px;width:97px;text-align:right;color:#000"><span class="s r">497 140.00</span></div>
<div class="c" style="left:947px;width:38px"></div>
<div class="ic" style=""><svg class="a" style="left:3px;top:11px" width="14" height="16" viewBox="0 0 14 16"><path d="M1.500 14.500 H12.500 V2" fill="none" stroke="#c3cfdf" stroke-width="1" opacity=".7"/><path d="M3.500 0.500 H11.500 V13.500 H0.500 V3.500 Z" fill="#ffff8a" stroke="#e85c00" stroke-width="1.100" stroke-linejoin="miter"/><path d="M1 3.500 H3.500 V1" fill="none" stroke="#e85c00" stroke-width="1"/><path d="M6 5.500 H10 M2 7.500 H10 M2 9.500 H10 M2 11.500 H10" stroke="#e85c00" stroke-width="1"/></svg></div>
</div>
<div class="row" style="top:378px;height:70px;background:#e9e9fd">
<div class="ind"></div>
<div class="c" style="left:18px;width:71px;color:#000"><span class="s">09.09.2010</span></div>
<div class="c" style="left:89px;width:103px;color:#000"><span class="s">нак 27</span></div>
<div class="c" style="left:192px;width:658px;color:#000;padding-left:4px"><span class="s"><span style="display:inline-block;width:86px;overflow:hidden;vertical-align:top">Реализация </span><span style="letter-spacing:0.125px">ООО "Русские колбасы" : МЛ №1 Колбаса "Любительская" (синюга); Колбаса "Докторская"</span></span></div>
<div class="c" style="left:850px;width:97px;text-align:right;color:#000"><span class="s r">61 300.00</span></div>
<div class="c" style="left:947px;width:38px"></div>
<div class="ic" style=""><svg class="a" style="left:3px;top:27px" width="14" height="16" viewBox="0 0 14 16"><path d="M1.500 14.500 H12.500 V2" fill="none" stroke="#c3cfdf" stroke-width="1" opacity=".7"/><path d="M3.500 0.500 H11.500 V13.500 H0.500 V3.500 Z" fill="#ffff8a" stroke="#e85c00" stroke-width="1.100" stroke-linejoin="miter"/><path d="M1 3.500 H3.500 V1" fill="none" stroke="#e85c00" stroke-width="1"/><path d="M6 5.500 H10 M2 7.500 H10 M2 9.500 H10 M2 11.500 H10" stroke="#e85c00" stroke-width="1"/></svg></div>
</div>
<svg class="a" style="left:1010px;top:7px" width="8" height="5" viewBox="0 0 8 5"><path d="M0.500 4.500 L4 0.700 L7.500 4.500 Z" fill="#333"/></svg>
<svg class="a" style="left:1010px;top:386px" width="8" height="5" viewBox="0 0 8 5"><path d="M0.500 0.500 L4 4.300 L7.500 0.500 Z" fill="#333"/></svg>
<div class="a" style="left:1006px;top:276px;width:15px;height:16px;border:1px solid #979797;border-radius:3px;background:linear-gradient(90deg,#f8f8f8,#ececec 45%,#d8d8d8 50%,#cfcfcf);box-shadow:inset 0 0 0 1px #fff"></div>
</div>
<div class="a" style="left:0;top:541px;width:1024px;height:24px;background:linear-gradient(#dce9fa,#d6e5f9 28%,#bfd7f5 32%,#c6dbf6 60%,#d8e6f9);border-top:1px solid #a6c3ea"></div>
<div class="t" style="left:5px;top:545px">165/226</div>
<div class="a" style="left:0;top:565px;width:1024px;height:4px;background:#dfe9f6"></div>
<div class="a" style="left:2px;top:565px;width:1018px;height:4px;background:#6f9bd8;border-radius:2px"></div>
<div class="a" style="left:504px;top:566px;width:16px;height:2px;background:repeating-linear-gradient(90deg,#fff 0 1px,transparent 1px 3px)"></div>
<div class="a" style="left:0;top:569px;width:1024px;height:113px;background:#fff;overflow:hidden">
<div class="a" style="left:1005px;top:0;width:18px;height:114px;background:#f0f0f0;"></div>
<div class="hd" style="left:0px;width:18px;"><span class="s m"></span></div>
<div class="hd" style="left:18px;width:167px;background:linear-gradient(#d1d8e5,#e6eaf1 50%,#f6f8fb);border-right-color:#fff"><span class="s m">Дебет</span></div>
<div class="hd" style="left:185px;width:167px;"><span class="s m">Кредит</span></div>
<div class="hd" style="left:352px;width:60px;"><span class="s m">СУ</span></div>
<div class="hd" style="left:412px;width:420px;"><span class="s m">Кол-во/Цена</span></div>
<div class="hd" style="left:832px;width:173px;"><span class="s m">Сумма</span></div>
<div class="a" style="left:0;top:23px;width:1004px;height:1px;background:#a9bdd9"></div>
<div class="row" style="top:24px;height:22px;background:#c6e2fc">
<div class="ind"><svg class="a" style="left:6px;top:5px" width="7" height="11" viewBox="0 0 7 11"><path d="M1 1.5 L5 5.5 L1 9.5" fill="none" stroke="#3a4a66" stroke-width="1.8"/></svg></div>
<div class="c" style="left:18px;width:167px;color:#0000ff"><span class="s">62/ПРОЧ/Аэродуб</span></div>
<div class="c" style="left:185px;width:167px;color:#808000"><span class="s">90/В/10/-</span></div>
<div class="c" style="left:352px;width:60px;color:#000"><span class="s">Д/Д/ВСП</span></div>
<div class="c" style="left:412px;width:420px;text-align:right"><span class="s r">-</span></div>
<div class="c" style="left:832px;width:173px;text-align:right;border-right:none;color:#000"><span class="s r">21 430.54</span></div>
</div>
<div class="row" style="top:46px;height:38px;background:#e9e9fd">
<div class="ind"></div>
<div class="c" style="left:18px;width:167px;color:#808000"><span class="s">90/НДС/10</span></div>
<div class="c" style="left:185px;width:167px;color:#000"><span class="s">68/НДС</span></div>
<div class="c" style="left:352px;width:60px;color:#000"><span class="s">Д/Д/ВСП</span></div>
<div class="c" style="left:412px;width:420px;text-align:right"><span class="s r">-</span></div>
<div class="c" style="left:832px;width:173px;text-align:right;border-right:none;color:#ff0000"><span class="s r">1 948.24<br>НУ -1 948.24</span></div>
</div>
<div class="row" style="top:84px;height:38px;background:#fff">
<div class="ind"></div>
<div class="c" style="left:18px;width:167px;color:#808000"><span class="s">90/С</span></div>
<div class="c" style="left:185px;width:167px;color:#008080"><span class="s">41/ТЗ/0099</span></div>
<div class="c" style="left:352px;width:60px;color:#ff0000"><span class="s">Т/РП</span></div>
<div class="c" style="left:412px;width:420px;text-align:right"><span class="s r">50.9 кг<br>151.12</span></div>
<div class="c" style="left:832px;width:173px;text-align:right;border-right:none;color:#000"><span class="s r">7 691.96</span></div>
</div>
<svg class="a" style="left:1010px;top:7px" width="8" height="5" viewBox="0 0 8 5"><path d="M0.500 4.500 L4 0.700 L7.500 4.500 Z" fill="#333"/></svg>
<svg class="a" style="left:1010px;top:103px" width="8" height="5" viewBox="0 0 8 5"><path d="M0.500 0.500 L4 4.300 L7.500 0.500 Z" fill="#333"/></svg>
<div class="a" style="left:1006px;top:18px;width:15px;height:19px;border:1px solid #979797;border-radius:3px;background:linear-gradient(90deg,#f8f8f8,#ececec 45%,#d8d8d8 50%,#cfcfcf);box-shadow:inset 0 0 0 1px #fff"><div class="a" style="left:3px;top:5px;width:7px;height:8px;background:repeating-linear-gradient(#6a6a6a 0 1px,#fff 1px 2px,transparent 2px 3px)"></div></div>
</div>
<div class="a" style="left:0;top:682px;width:1024px;height:24px;background:linear-gradient(#e2edfb 0,#d6e5f9 1px,#d5e4f8 29%,#bdd6f5 31%,#c4daf6 65%,#d3e3f8 100%);border-top:1px solid #a3c2ea"></div>
<div class="t" style="left:4px;top:686px">Проводка: 1/6</div>
<div class="a" style="left:92px;top:684px;width:1px;height:20px;background:#a4bfe4;box-shadow:1px 0 0 #e3eefb"></div>
<div class="a" style="left:838px;top:684px;width:1px;height:20px;background:#a4bfe4;box-shadow:1px 0 0 #e3eefb"></div>
<div class="t" style="left:843px;top:686px;letter-spacing:-0.32px">Итого по операции: 41 208.94</div>
<div class="a" style="left:0;top:706px;width:1024px;height:22px;background:linear-gradient(#eef4fc 0,#d7e6f9 1px,#d6e5f9 32%,#bfd7f5 34%,#c4daf6 65%,#d0e1f7 100%);border-top:1px solid #a9c6ec"></div>
<div class="t" style="left:4px;top:709px">Для вызова подсказки нажмите F1</div>
<div class="a" style="left:636px;top:708px;width:1px;height:20px;background:#a4bfe4;box-shadow:1px 0 0 #e3eefb"></div>
<div class="a" style="left:773px;top:708px;width:1px;height:20px;background:#a4bfe4;box-shadow:1px 0 0 #e3eefb"></div>
<div class="a" style="left:939px;top:708px;width:1px;height:20px;background:#a4bfe4;box-shadow:1px 0 0 #e3eefb"></div>
<div class="t" style="left:641px;top:709px">Отч.период: год 2010</div>
<svg class="a" style="left:778px;top:711px" width="10" height="14" viewBox="0 0 10 14"><defs><linearGradient id="dbg" x1="0" y1="0" x2="1" y2="0"><stop offset="0" stop-color="#e9c22a"/><stop offset=".35" stop-color="#fff7a8"/><stop offset=".7" stop-color="#f2cf3a"/><stop offset="1" stop-color="#c79a10"/></linearGradient></defs><path d="M0.500 2.300 V11 C0.500 13.300,8.500 13.300,8.500 11 V2.300 C8.500 0,0.500 0,0.500 2.300 Z" fill="url(#dbg)" stroke="#c49a18" stroke-width=".9"/><path d="M0.500 6.600 C0.500 8.300,8.500 8.300,8.500 6.600" fill="none" stroke="#c49a18" stroke-width=".9"/><ellipse cx="4.500" cy="2.400" rx="3.300" ry="1.200" fill="#fff3a0" opacity=".8"/></svg>
<div class="t" style="left:791px;top:709px">Демонстрационная база</div>
<div class="t" style="left:944px;top:709px">ООО "Удача"</div>
<div class="a" style="left:0;top:143px;width:1px;height:539px;background:#a3c2ea"></div>
<div class="a" style="left:1022px;top:144px;width:2px;height:538px;background:#e4ecf7;border-right:1px solid #a3c2ea"></div>
<div class="a" style="left:52px;top:382px;width:223px;height:186px;background:#f5f7fb;border:1px solid #7da2d8;box-shadow:4px 4px 2px rgba(0,0,0,.42),inset 1px 1px 0 #fff">
<div class="a" style="left:1px;top:1px;width:219px;height:25px;background:linear-gradient(#ffffff,#f0f4f9 20%,#d7e2ef 52%,#b6d1f1 54%,#bed6f3 78%,#d2e2f6)"></div>
<div class="a" style="left:1px;top:26px;width:219px;height:1px;background:#c0d3ec"></div>
<div class="mi" style="left:8px;top:5px;font-weight:bold;letter-spacing:-0.22px">Ограничить выборку :</div>
<div class="a" style="left:1px;top:27px;width:25px;height:156px;background:#d8e5f4;border-right:1px solid #c3d3e8"></div>
<div class="mi" style="top:32px;left:33px">1 февраля 2010 г.</div>
<div class="a" style="left:1px;top:53px;width:219px;height:26px;border:1px solid #e3ae45;border-bottom-color:#d29c2c;border-radius:3px;background:linear-gradient(#fffbe8 0,#fdf4c8 6%,#fbe9a4 54%,#f3d03c 58%,#f6dc62 78%,#fdf3b8 100%)"></div>
<div class="mi" style="top:58px;left:33px"><u>Н</u>еделя с 1 по 7</div>
<div class="mi" style="top:84px;left:33px">Февраль</div>
<div class="mi" style="top:110px;left:33px">I квартал</div>
<div class="mi" style="top:136px;left:33px">Каждый <u>П</u>онедельник</div>
<div class="mi" style="top:162px;left:33px"><span style="letter-spacing:-0.13px">1-е число каждого месяца</span></div>
</div>
<div class="a" style="left:693px;top:245px;width:292px;height:311px;background:#f5f7fb;border:1px solid #7da2d8;box-shadow:3px 3px 2px rgba(0,0,0,.45),inset 1px 1px 0 #fff">
<div class="a" style="left:1px;top:1px;width:26px;height:307px;background:#d8e5f4;border-right:1px solid #c3d3e8"></div>
<div class="mi" style="top:6px;left:33px;font-weight:bold;letter-spacing:-0.35px;">Изменить операцию...</div>
<div class="mi" style="top:32px;left:33px;">Ко<u>м</u>плект</div>
<div class="mi" style="top:32px;left:auto;right:8px">F3</div>
<div class="ms" style="top:54px"></div>
<div class="mi" style="top:61px;left:33px;">Счет-фактура</div>
<div class="mi" style="top:87px;left:33px;">Накладная ТОРГ-1<u>2</u></div>
<div class="ms" style="top:109px"></div>
<div class="mi" style="top:116px;left:33px;"><u>Н</u>акладная</div>
<div class="mi" style="top:116px;left:auto;right:8px">Ctrl+Y</div>
<div class="mi" style="top:142px;left:33px;"><span style="letter-spacing:-0.17px">Товарно-транспортная накладная 1-Т</span></div>
<div class="ms" style="top:164px"></div>
<div class="mi" style="top:171px;left:33px;">Связанные документы...</div>
<div class="ms" style="top:193px"></div>
<div class="mi" style="top:200px;left:33px;">На<u>й</u>ти документ-основание</div>
<div class="ms" style="top:222px"></div>
<div class="mi" style="top:229px;left:33px;">Подсветк<u>а</u></div>
<div class="ms" style="top:251px"></div>
<div class="mi" style="top:258px;left:33px;">Фи<u>л</u>ьтрация по...</div>
<svg class="a" style="left:278px;top:262px" width="5" height="8" viewBox="0 0 5 8"><path d="M0.5 0 L4.5 4 L0.5 8 Z" fill="#000"/></svg>
<div class="ms" style="top:280px"></div>
<div class="mi" style="top:287px;left:33px;">ТОРГ-12 Накладная</div>
</div>
</body></html>
